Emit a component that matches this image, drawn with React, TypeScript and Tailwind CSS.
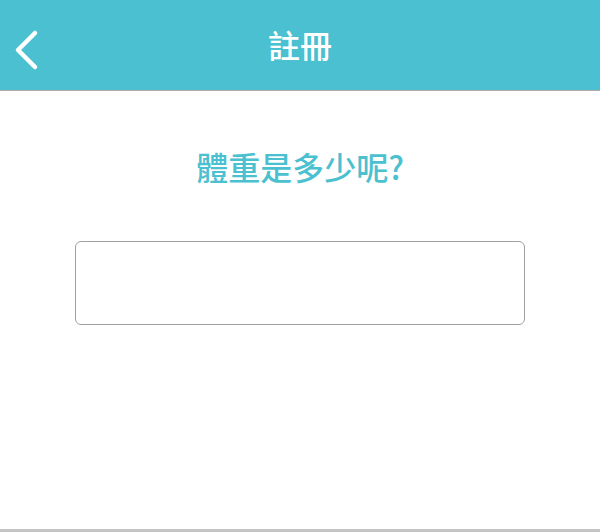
export default function App() {
  return (
    <div className="w-[600px] h-[532px] flex flex-col bg-white overflow-hidden"
      style={{ fontFamily: '"Noto Sans CJK TC", "Noto Sans", sans-serif' }}>
      {/* Header */}
      <header className="relative h-[91px] shrink-0 flex items-center justify-center bg-[#4bc0d0] border-b border-[#b4aaaa]">
        <button className="absolute left-[10px] top-[25px] p-1" aria-label="Back">
          <svg width="26" height="42" viewBox="0 0 26 42" fill="none" stroke="#fff"
            strokeWidth="4.5" strokeLinecap="round" strokeLinejoin="round">
            <path d="M21 4L4 21l17 17" />
          </svg>
        </button>
        <h1 className="text-[32px] leading-none font-medium text-white -mt-[2px]">註冊</h1>
      </header>

      {/* Body */}
      <main className="flex-1 flex flex-col items-center pt-[55px]">
        <h2 className="text-[32px] leading-[40px] font-medium text-[#4bc0d0]">體重是多少呢?</h2>
        <input className="mt-[55px] w-[450px] h-[84px] rounded-[6px] border border-[#a0a0a0] px-4 text-2xl outline-none" />
      </main>

      <div className="h-[3px] shrink-0 bg-[#c4c4c4]" />
    </div>
  );
}
